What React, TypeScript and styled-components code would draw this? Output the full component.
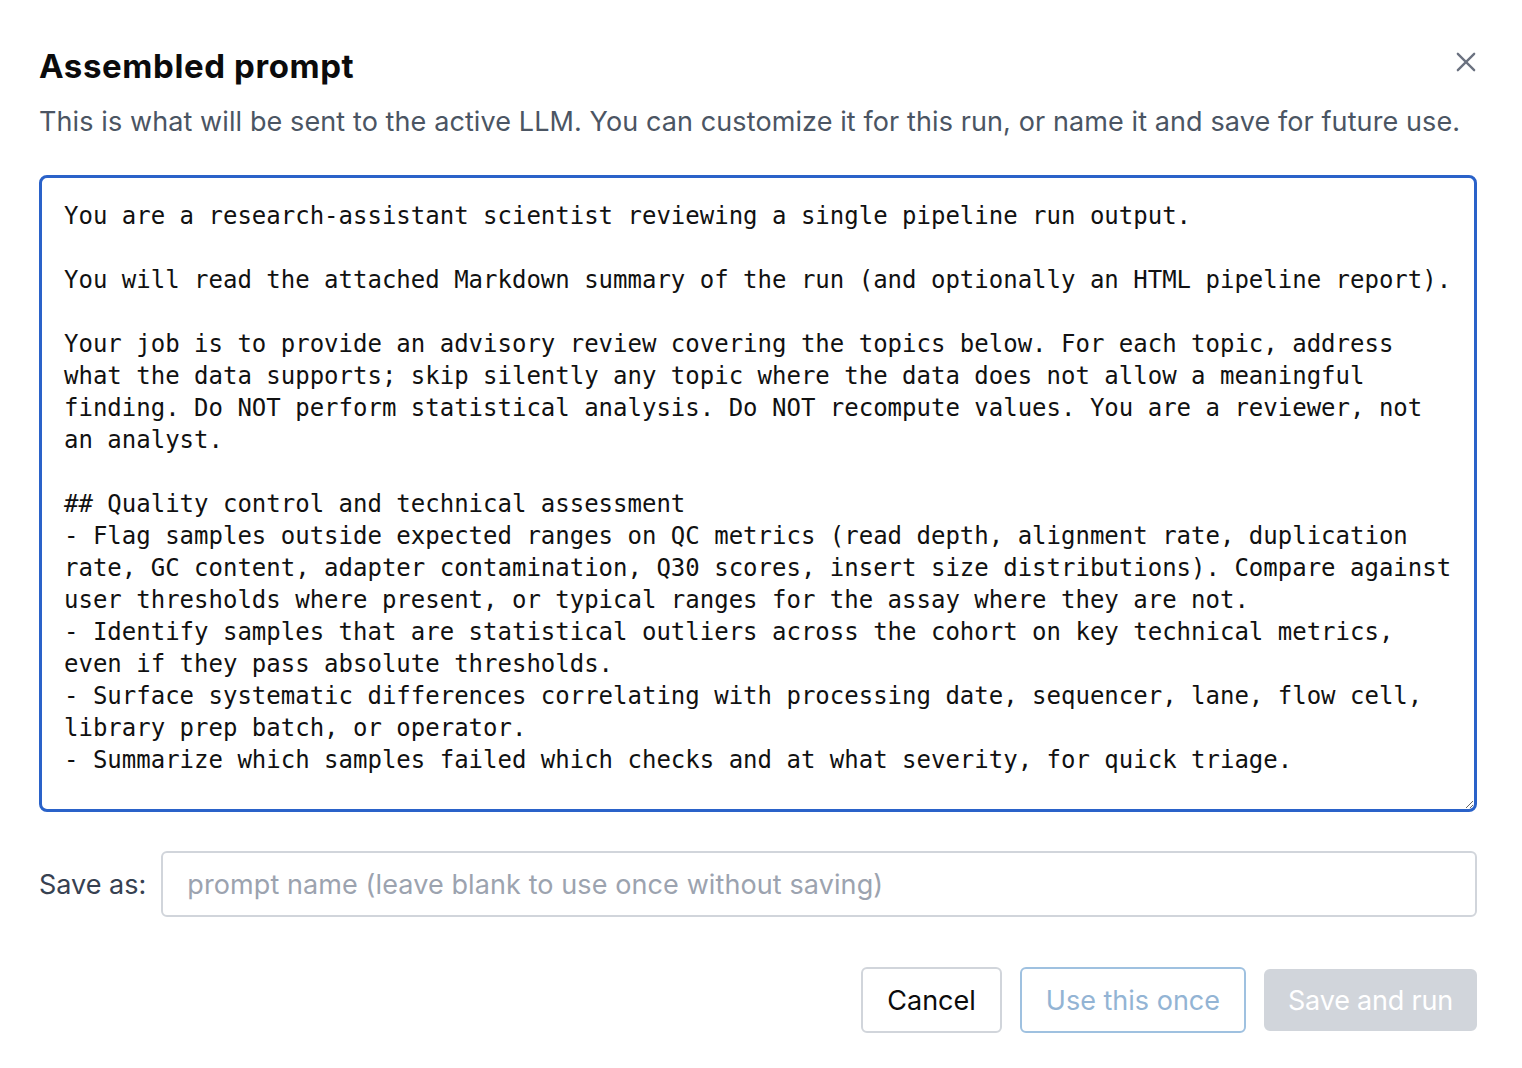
import React from "react";
import styled, { createGlobalStyle } from "styled-components";

const GlobalStyle = createGlobalStyle`
  html, body {
    margin: 0;
    padding: 0;
    background: #ffffff;
    font-family: "Inter", "Noto Sans", "Liberation Sans", sans-serif;
  }
`;

const Dialog = styled.div`
  display: flex;
  flex-direction: column;
  padding: 46px 45px 0 39px;
  box-sizing: border-box;
  width: 1522px;
  min-height: 1068px;
`;

const Header = styled.div`
  display: flex;
  align-items: flex-start;
  justify-content: space-between;
`;

const Title = styled.h2`
  margin: 0;
  font-size: 33px;
  line-height: 40px;
  font-weight: 700;
  color: #0b0b0c;
  letter-spacing: 0.6px;
`;

const CloseButton = styled.button`
  display: flex;
  align-items: center;
  justify-content: center;
  width: 32px;
  height: 32px;
  margin: 0 -5px 0 0;
  padding: 0;
  border: none;
  background: transparent;
  color: #6b7280;
  cursor: pointer;
`;

const Subtitle = styled.p`
  margin: 18px 0 0;
  font-size: 27px;
  line-height: 36px;
  letter-spacing: 0.1px;
  color: #4b5563;
`;

const PromptArea = styled.textarea`
  display: block;
  margin-top: 35px;
  width: 100%;
  height: 637px;
  box-sizing: border-box;
  padding: 22px 14px 22px 22px;
  border: 3px solid #2a62c9;
  border-radius: 8px;
  outline: none;
  font-family: "DejaVu Sans Mono", "Liberation Mono", monospace;
  font-size: 24px;
  line-height: 32px;
  color: #111111;
  white-space: pre-wrap;
  resize: vertical;
`;

const SaveRow = styled.div`
  display: flex;
  align-items: center;
  gap: 15px;
  margin-top: 39px;
`;

const Label = styled.label`
  font-size: 27px;
  color: #374151;
  white-space: nowrap;
`;

const NameInput = styled.input`
  flex: 1;
  height: 66px;
  box-sizing: border-box;
  padding: 0 24px;
  border: 2px solid #d1d5db;
  border-radius: 6px;
  font-family: inherit;
  font-size: 27px;
  letter-spacing: 0.1px;
  color: #111827;
  outline: none;

  &::placeholder {
    color: #9ca3af;
  }
`;

const Actions = styled.div`
  display: flex;
  justify-content: flex-end;
  align-items: center;
  gap: 18px;
  margin-top: 50px;
`;

const Button = styled.button<{ $variant: "plain" | "outline" | "disabled" }>`
  height: ${(p) => (p.$variant === "disabled" ? "62px" : "66px")};
  box-sizing: border-box;
  padding: 0 ${(p) => (p.$variant === "disabled" ? "22px" : "24px")};
  border-radius: 6px;
  font-family: inherit;
  font-size: 27px;
  letter-spacing: ${(p) => (p.$variant === "disabled" ? "-0.2px" : "0")};
  cursor: ${(p) => (p.$variant === "disabled" ? "default" : "pointer")};
  border: 2px solid
    ${(p) =>
      p.$variant === "plain"
        ? "#d1d5db"
        : p.$variant === "outline"
        ? "#9fc1e0"
        : "#d1d5db"};
  background: ${(p) => (p.$variant === "disabled" ? "#d1d5db" : "#ffffff")};
  color: ${(p) =>
    p.$variant === "plain"
      ? "#0b0b0c"
      : p.$variant === "outline"
      ? "#93b4d4"
      : "#ffffff"};
`;

const PROMPT = `You are a research-assistant scientist reviewing a single pipeline run output.

You will read the attached Markdown summary of the run (and optionally an HTML pipeline report).

Your job is to provide an advisory review covering the topics below. For each topic, address
what the data supports; skip silently any topic where the data does not allow a meaningful
finding. Do NOT perform statistical analysis. Do NOT recompute values. You are a reviewer, not
an analyst.

## Quality control and technical assessment
- Flag samples outside expected ranges on QC metrics (read depth, alignment rate, duplication
rate, GC content, adapter contamination, Q30 scores, insert size distributions). Compare against
user thresholds where present, or typical ranges for the assay where they are not.
- Identify samples that are statistical outliers across the cohort on key technical metrics,
even if they pass absolute thresholds.
- Surface systematic differences correlating with processing date, sequencer, lane, flow cell,
library prep batch, or operator.
- Summarize which samples failed which checks and at what severity, for quick triage.`;

export default function App() {
  return (
    <>
      <GlobalStyle />
      <Dialog>
        <Header>
          <Title>Assembled prompt</Title>
          <CloseButton aria-label="Close">
            <svg width="28" height="28" viewBox="0 0 24 24" fill="none" stroke="currentColor" strokeWidth="2" strokeLinecap="round">
              <path d="M5 5l14 14M19 5L5 19" />
            </svg>
          </CloseButton>
        </Header>
        <Subtitle>
          This is what will be sent to the active LLM. You can customize it for this run, or name it and save for future use.
        </Subtitle>
        <PromptArea defaultValue={PROMPT} spellCheck={false} />
        <SaveRow>
          <Label htmlFor="prompt-name">Save as:</Label>
          <NameInput id="prompt-name" placeholder="prompt name (leave blank to use once without saving)" />
        </SaveRow>
        <Actions>
          <Button $variant="plain">Cancel</Button>
          <Button $variant="outline">Use this once</Button>
          <Button $variant="disabled" disabled>
            Save and run
          </Button>
        </Actions>
      </Dialog>
    </>
  );
}
